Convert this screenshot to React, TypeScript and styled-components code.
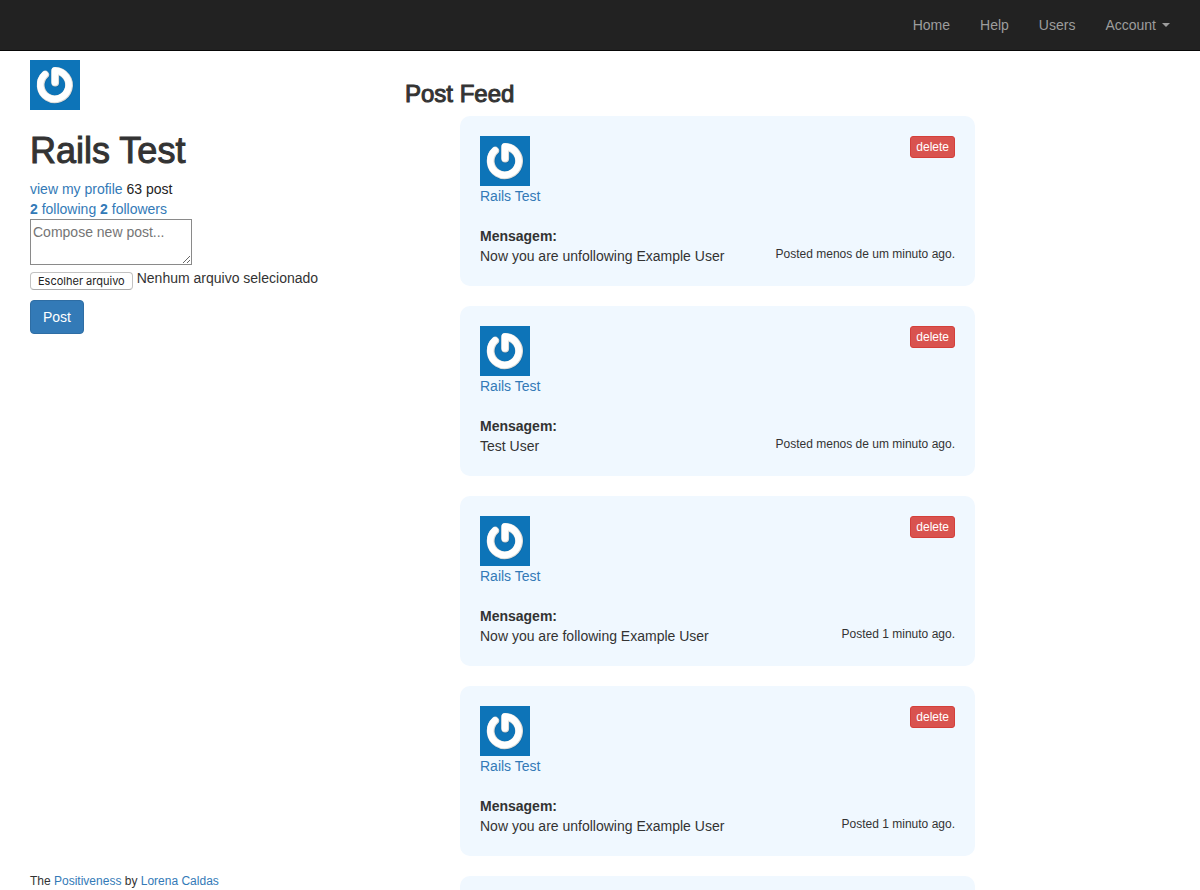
import React, { useState } from "react";
import styled, { createGlobalStyle } from "styled-components";

const GlobalStyle = createGlobalStyle`
  *, *::before, *::after { box-sizing: border-box; }
  body {
    margin: 0;
    background: #fff;
    color: #333;
    font-family: "Helvetica Neue", Helvetica, "Liberation Sans", Arial, sans-serif;
    font-size: 14px;
    line-height: 20px;
  }
`;

const Page = styled.div`
  display: flex;
  flex-direction: column;
  height: 100vh;
`;

const Navbar = styled.header`
  flex: none;
  background: #222;
  border-bottom: 1px solid #080808;
`;

const NavList = styled.nav`
  display: flex;
  justify-content: flex-end;
  padding: 0 15px;
`;

const NavLink = styled.a`
  display: flex;
  align-items: center;
  gap: 6px;
  padding: 15px;
  color: #9d9d9d;
  text-decoration: none;
  &:hover { color: #fff; }
`;

const Caret = styled.span`
  border-top: 4px solid;
  border-right: 4px solid transparent;
  border-left: 4px solid transparent;
`;

const Columns = styled.div`
  flex: 1;
  min-height: 0;
  display: grid;
  grid-template-columns: minmax(0, 1fr) minmax(0, 2fr);
  padding: 0 45px 0 30px;
`;

const Sidebar = styled.aside`
  display: flex;
  flex-direction: column;
  justify-content: space-between;
  padding-top: 9px;
`;

const AvatarImage = styled.svg`
  display: block;
  width: 50px;
  height: 50px;
`;

const UserName = styled.h1`
  margin: 21px 0 8px;
  font-size: 36px;
  font-weight: 500;
  line-height: 40px;
  -webkit-text-stroke: 1px;
`;

const Link = styled.a`
  color: #337ab7;
  text-decoration: none;
  &:hover { text-decoration: underline; }
`;

const Line = styled.div`
  color: #222;
`;

const Composer = styled.form`
  display: flex;
  flex-direction: column;
  align-items: flex-start;
`;

const PostText = styled.textarea`
  display: block;
  width: 162px;
  height: 46px;
  padding: 2px;
  border: 1px solid #8a8a8a;
  border-radius: 0;
  background: #fff;
  color: inherit;
  font: inherit;
  overflow: auto;
  &::placeholder { color: #757575; }
`;

const FileRow = styled.div`
  display: flex;
  align-items: flex-start;
  gap: 4px;
  margin: 3px 0 10px;
`;

const FileInput = styled.input`
  position: absolute;
  width: 1px;
  height: 1px;
  overflow: hidden;
  clip-path: inset(50%);
`;

const FileButton = styled.label`
  margin-top: 4px;
  padding: 0 7px;
  border: 1px solid #c2c2c2;
  border-bottom-color: #acacac;
  border-radius: 4px;
  background: #fff;
  color: #222;
  font-family: Inter, sans-serif;
  font-size: 11px;
  line-height: 16px;
  white-space: nowrap;
`;

const Button = styled.button<{ $kind: "primary" | "danger" }>`
  flex: none;
  border: 1px solid ${(p) => (p.$kind === "primary" ? "#2e6da4" : "#d43f3a")};
  border-radius: ${(p) => (p.$kind === "primary" ? 4 : 3)}px;
  padding: ${(p) => (p.$kind === "primary" ? "6px 12px" : "1px 5px")};
  background: ${(p) => (p.$kind === "primary" ? "#337ab7" : "#d9534f")};
  color: #fff;
  font-family: inherit;
  font-size: ${(p) => (p.$kind === "primary" ? 14 : 12)}px;
  line-height: ${(p) => (p.$kind === "primary" ? 20 : 18)}px;
  cursor: pointer;
`;

const Footer = styled.footer`
  font-size: 12px;
  line-height: 18px;
`;

const Feed = styled.main`
  overflow-y: auto;
  scrollbar-width: none;
`;

const FeedTitle = styled.h3`
  margin: 30px 0 9px;
  font-size: 24px;
  font-weight: 500;
  line-height: 26px;
  -webkit-text-stroke: 1px;
`;

const Posts = styled.ol`
  display: flex;
  flex-direction: column;
  gap: 20px;
  max-width: 570px;
  margin: 0;
  padding: 0 0 20px 55px;
  list-style: none;
`;

const Card = styled.li`
  padding: 20px;
  border-radius: 10px;
  background: #f0f8ff;
`;

const CardRow = styled.div`
  display: flex;
  align-items: flex-start;
  justify-content: space-between;
  & + & { margin-top: 20px; }
`;

const Message = styled.p`
  margin: 0;
`;

const Posted = styled.time`
  margin-top: 18px;
  font-size: 12px;
  line-height: 20px;
  white-space: nowrap;
`;

function Avatar() {
  return (
    <AvatarImage viewBox="0 0 50 50" role="img" aria-label="Rails Test">
      <rect width="50" height="50" fill="#0d74b8" />
      <g fill="none" strokeLinecap="round" strokeLinejoin="round">
        <path d="M25.6 23.2V11.3A14.2 14.2 0 1 1 15.6 15.1" stroke="#07568f" strokeOpacity=".4" strokeWidth="8.2" />
        <path d="M25.2 22.6V10.9A14.2 14.2 0 1 1 15.2 14.7" stroke="#dcdcd8" strokeWidth="7.8" />
        <path d="M24.8 22.2V10.5A14.2 14.2 0 1 1 14.8 14.3" stroke="#fff" strokeWidth="6.4" />
      </g>
    </AvatarImage>
  );
}

const posts = [
  { text: "Now you are unfollowing Example User", when: "menos de um minuto" },
  { text: "Test User", when: "menos de um minuto" },
  { text: "Now you are following Example User", when: "1 minuto" },
  { text: "Now you are unfollowing Example User", when: "1 minuto" },
  { text: "Now you are following Example User", when: "1 minuto" },
];

export default function App() {
  const [fileName, setFileName] = useState("");
  return (
    <>
      <GlobalStyle />
      <Page>
        <Navbar>
          <NavList>
            <NavLink href="#home">Home</NavLink>
            <NavLink href="#help">Help</NavLink>
            <NavLink href="#users">Users</NavLink>
            <NavLink href="#account">
              Account <Caret />
            </NavLink>
          </NavList>
        </Navbar>
        <Columns>
          <Sidebar>
            <div>
              <Avatar />
              <UserName>Rails Test</UserName>
              <Line>
                <Link href="#profile">view my profile</Link> 63 post
              </Line>
              <Line>
                <Link href="#following"><strong>2</strong> following</Link>{" "}
                <Link href="#followers"><strong>2</strong> followers</Link>
              </Line>
              <Composer onSubmit={(e) => e.preventDefault()}>
                <PostText aria-label="New post" placeholder="Compose new post..." />
                <FileRow>
                  <FileInput
                    id="picture"
                    type="file"
                    onChange={(e) => setFileName(e.target.files?.[0]?.name ?? "")}
                  />
                  <FileButton htmlFor="picture">Escolher arquivo</FileButton>
                  <span>{fileName || "Nenhum arquivo selecionado"}</span>
                </FileRow>
                <Button $kind="primary" type="submit">Post</Button>
              </Composer>
            </div>
            <Footer>
              The <Link href="#positiveness">Positiveness</Link> by{" "}
              <Link href="#author">Lorena Caldas</Link>
            </Footer>
          </Sidebar>
          <Feed>
            <FeedTitle>Post Feed</FeedTitle>
            <Posts>
              {posts.map((post, i) => (
                <Card key={i}>
                  <CardRow>
                    <div>
                      <Avatar />
                      <Link href="#profile">Rails Test</Link>
                    </div>
                    <Button $kind="danger" type="button">delete</Button>
                  </CardRow>
                  <CardRow>
                    <Message>
                      <strong>Mensagem:</strong>
                      <br />
                      {post.text}
                    </Message>
                    <Posted>Posted {post.when} ago.</Posted>
                  </CardRow>
                </Card>
              ))}
            </Posts>
          </Feed>
        </Columns>
      </Page>
    </>
  );
}
